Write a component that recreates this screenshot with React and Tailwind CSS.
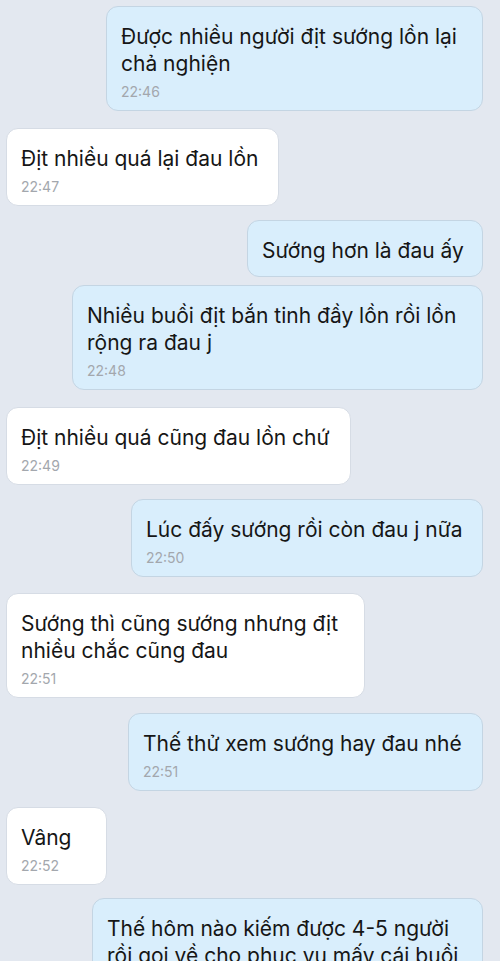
const messages = [
  { me: true, mt: "mt-[6px]", w: "w-[377px]", lines: ["Được nhiều người địt sướng lồn lại", "chả nghiện"], time: "22:46" },
  { me: false, mt: "mt-[17px]", w: "w-[273px]", lines: ["Địt nhiều quá lại đau lồn"], time: "22:47" },
  { me: true, mt: "mt-[14px]", w: "w-[236px]", lines: ["Sướng hơn là đau ấy"] },
  { me: true, mt: "mt-[8px]", w: "w-[411px]", lines: ["Nhiều buồi địt bắn tinh đầy lồn rồi lồn", "rộng ra đau j"], time: "22:48" },
  { me: false, mt: "mt-[17px]", w: "w-[345px]", lines: ["Địt nhiều quá cũng đau lồn chứ"], time: "22:49" },
  { me: true, mt: "mt-[14px]", w: "w-[352px]", lines: ["Lúc đấy sướng rồi còn đau j nữa"], time: "22:50" },
  { me: false, mt: "mt-[16px]", w: "w-[359px]", lines: ["Sướng thì cũng sướng nhưng địt", "nhiều chắc cũng đau"], time: "22:51" },
  { me: true, mt: "mt-[15px]", w: "w-[355px]", lines: ["Thế thử xem sướng hay đau nhé"], time: "22:51" },
  { me: false, mt: "mt-[16px]", w: "w-[101px]", lines: ["Vâng"], time: "22:52" },
  { me: true, mt: "mt-[13px]", w: "w-[391px]", lines: ["Thế hôm nào kiếm được 4-5 người", "rồi gọi về cho phục vụ mấy cái buồi"], time: "22:53" },
];

function Bubble({ m }) {
  return (
    <div className={`flex ${m.me ? "justify-end pr-[17px]" : "justify-start pl-[6px]"} ${m.mt}`}>
      <div
        className={`${m.w} rounded-[12px] border px-[14px] pt-[16px] ${m.time ? "pb-[9px]" : "pb-[12px]"} ${
          m.me ? "bg-[#d9eefc] border-[#c4d5e3]" : "bg-white border-[#d6dce5]"
        }`}
      >
        <div className="text-[21px] leading-[27px] text-[#161616] whitespace-nowrap">
          {m.lines.map((l, i) => (
            <div key={i}>{l}</div>
          ))}
        </div>
        {m.time && (
          <div className="mt-[6px] text-[14px] leading-[18px] text-[#a3a7ad]">{m.time}</div>
        )}
      </div>
    </div>
  );
}

export default function App() {
  return (
    <div
      className="w-[500px] h-[961px] overflow-hidden bg-[#e3e8f0]"
      style={{ fontFamily: "Inter, 'Noto Sans', sans-serif" }}
    >
      {messages.map((m, i) => (
        <Bubble key={i} m={m} />
      ))}
    </div>
  );
}
